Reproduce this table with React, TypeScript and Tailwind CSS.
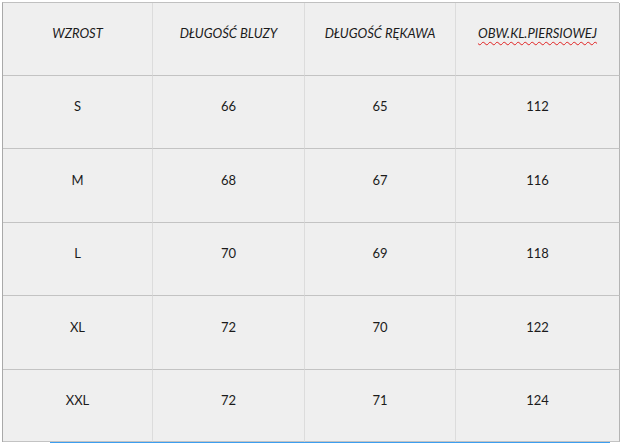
import React from "react";

const HEADERS = ["WZROST", "DŁUGOŚĆ BLUZY", "DŁUGOŚĆ RĘKAWA", "OBW.KL.PIERSIOWEJ"];

const ROWS: { size: string; values: string[]; h: string }[] = [
  { size: "S", values: ["66", "65", "112"], h: "h-[73px]" },
  { size: "M", values: ["68", "67", "116"], h: "h-[74px]" },
  { size: "L", values: ["70", "69", "118"], h: "h-[73px]" },
  { size: "XL", values: ["72", "70", "122"], h: "h-[74px]" },
  { size: "XXL", values: ["72", "71", "124"], h: "h-[72px]" },
];

function Cell({ children, last, height }: { children: React.ReactNode; last?: boolean; height: string }) {
  return (
    <div
      className={`flex items-center justify-center pb-[10px] ${height} border-b border-b-[#c3c3c3] ${
        last ? "border-r border-r-[#b4b4b4]" : "border-r border-r-[#dcdcdc]"
      }`}
    >
      {children}
    </div>
  );
}

export default function App() {
  return (
    <div className="w-[622px] h-[443px] overflow-hidden bg-white pt-[2px] pl-[2px] font-['Lato',sans-serif] text-[13px] text-[#1b1b1b]">
      <div className="grid w-[617px] grid-cols-[150px_152px_151px_164px] border-l border-t border-l-[#a9a9a9] border-t-[#c0c0c0] bg-[#efefef]">
        {HEADERS.map((h, i) => (
          <Cell key={h} last={i === 3} height="h-[73px]">
            {i === 3 ? (
              <span className="italic underline decoration-wavy decoration-[#e02020] decoration-1 underline-offset-[3px]">{h}</span>
            ) : (
              <span className="italic">{h}</span>
            )}
          </Cell>
        ))}
        {ROWS.map((r) => (
          <React.Fragment key={r.size}>
            <Cell height={r.h}>{r.size}</Cell>
            {r.values.map((v, i) => (
              <Cell key={i} last={i === 2} height={r.h}>
                {v}
              </Cell>
            ))}
          </React.Fragment>
        ))}
      </div>
      <div className="ml-[48px] h-[2px] w-[560px] bg-[#3c9ef0]" />
    </div>
  );
}
